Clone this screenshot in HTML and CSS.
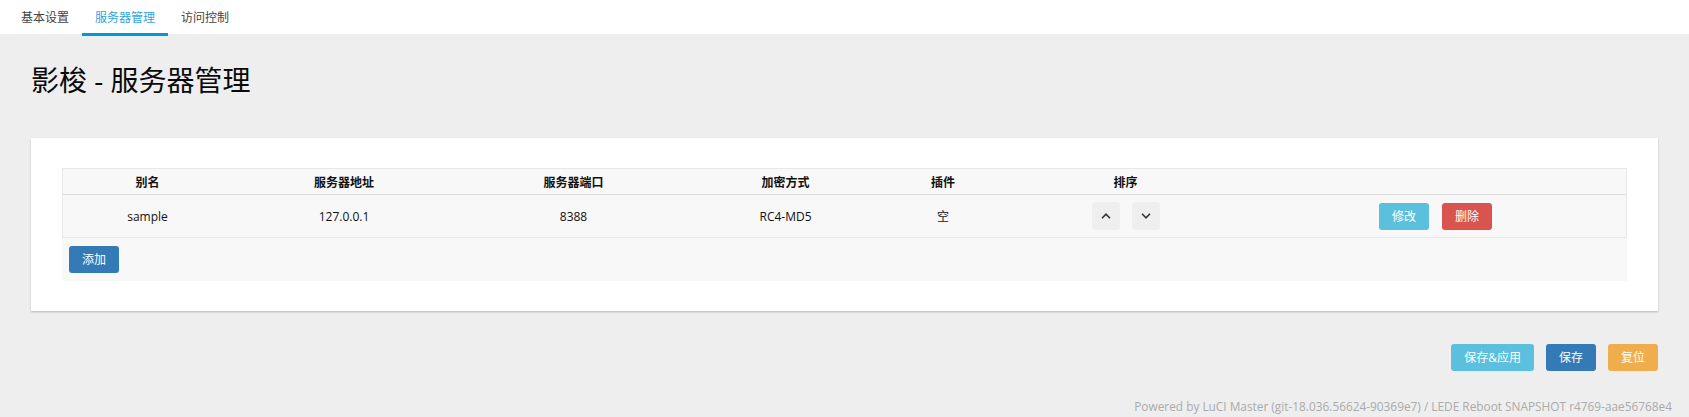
FILE: index.html
```html
<!DOCTYPE html>
<html lang="zh-CN">
<head>
<meta charset="utf-8">
<title>影梭 - 服务器管理</title>
<link rel="stylesheet" href="styles.css">
</head>
<body>
<header class="topbar">
  <nav class="tabs">
    <a class="tab">基本设置</a>
    <a class="tab active">服务器管理</a>
    <a class="tab">访问控制</a>
  </nav>
</header>
<main class="main">
  <h2 class="title">影梭 - 服务器管理</h2>
  <section class="card">
    <table class="tbl">
      <colgroup>
        <col class="c1"><col class="c2"><col class="c3"><col class="c4"><col class="c5"><col class="c6"><col class="c7">
      </colgroup>
      <thead>
        <tr><th>别名</th><th>服务器地址</th><th>服务器端口</th><th>加密方式</th><th>插件</th><th>排序</th><th></th></tr>
      </thead>
      <tbody>
        <tr>
          <td>sample</td>
          <td>127.0.0.1</td>
          <td>8388</td>
          <td>RC4-MD5</td>
          <td>空</td>
          <td>
            <div class="sort">
              <button class="sbtn" title="上移"><svg width="10" height="6" viewBox="0 0 10 6"><polyline points="1,5.2 5,1.2 9,5.2" fill="none" stroke="#333" stroke-width="1.6"/></svg></button>
              <button class="sbtn" title="下移"><svg width="10" height="6" viewBox="0 0 10 6"><polyline points="1,0.8 5,4.8 9,0.8" fill="none" stroke="#333" stroke-width="1.6"/></svg></button>
            </div>
          </td>
          <td>
            <div class="ops">
              <button class="btn btn-info">修改</button>
              <button class="btn btn-danger">删除</button>
            </div>
          </td>
        </tr>
      </tbody>
    </table>
    <div class="addrow"><button class="btn btn-primary">添加</button></div>
  </section>
  <div class="actions">
    <button class="btn btn-info">保存&amp;应用</button>
    <button class="btn btn-primary">保存</button>
    <button class="btn btn-warning">复位</button>
  </div>
</main>
<footer class="footer">Powered by LuCI Master (git-18.036.56624-90369e7) / LEDE Reboot SNAPSHOT r4769-aae56768e4</footer>
</body>
</html>
```

FILE: styles.css
```css
* { box-sizing: border-box; }

body {
  margin: 0;
  background: #eeeeee;
  font-family: "Open Sans", "Noto Sans CJK SC", sans-serif;
  font-size: 12px;
  color: #222;
}

.topbar {
  background: #fff;
  height: 34px;
}

.tabs {
  display: flex;
  padding-left: 8px;
  height: 34px;
}

.tab {
  display: flex;
  align-items: center;
  height: 36px;
  padding: 0 13px;
  border-bottom: 3px solid transparent;
  color: #444;
  font-size: 12px;
  cursor: pointer;
}

.tab.active {
  border-bottom-color: #0099d6;
  color: #2ea4dc;
}

.main {
  padding: 0 31px;
}

.title {
  margin: 28px 0 0 0;
  font-size: 28px;
  line-height: 36px;
  font-weight: normal;
  color: #0a0a0a;
}

.card {
  margin-top: 40px;
  background: #fff;
  padding: 30px 31px;
  box-shadow: 0 1px 2px rgba(0, 0, 0, 0.22);
}

.tbl {
  width: 100%;
  table-layout: fixed;
  border-spacing: 0;
  border: 1px solid #e8e8e8;
  background: #f8f8f8;
}

.c1 { width: 169px; }
.c2 { width: 224px; }
.c3 { width: 235px; }
.c4 { width: 189px; }
.c5 { width: 126px; }
.c6 { width: 239px; }

.tbl th {
  height: 26px;
  padding: 0;
  font-weight: bold;
  text-align: center;
  color: #111;
  border-bottom: 1px solid #dcdcdc;
}

.tbl td {
  height: 42px;
  padding: 0;
  text-align: center;
  color: #111;
}

.sort {
  display: flex;
  justify-content: center;
  gap: 12px;
}

.sbtn {
  width: 28px;
  height: 28px;
  border: 0;
  border-radius: 3px;
  background: #efefef;
  display: flex;
  align-items: center;
  justify-content: center;
  padding: 0;
}

.ops {
  display: flex;
  justify-content: center;
  gap: 13px;
}

.addrow {
  background: #f8f8f8;
  height: 43px;
  padding: 8px 7px 0;
}

.btn {
  height: 27px;
  padding: 0 12px;
  border: 1px solid transparent;
  border-radius: 3px;
  color: #fff;
  font-family: "Open Sans", "Noto Sans CJK SC", sans-serif;
  font-size: 12px;
  line-height: 25px;
  cursor: pointer;
}

.btn-primary { background: #337ab7; }
.btn-info { background: #5bc0de; }
.btn-danger { background: #d9534f; }
.btn-warning { background: #f0ad4e; }

.actions {
  display: flex;
  justify-content: flex-end;
  gap: 12px;
  margin-top: 33px;
}

.footer {
  margin-top: 27px;
  padding-right: 17px;
  text-align: right;
  color: #aaa;
  font-size: 11.85px;
  line-height: 17px;
}
```
